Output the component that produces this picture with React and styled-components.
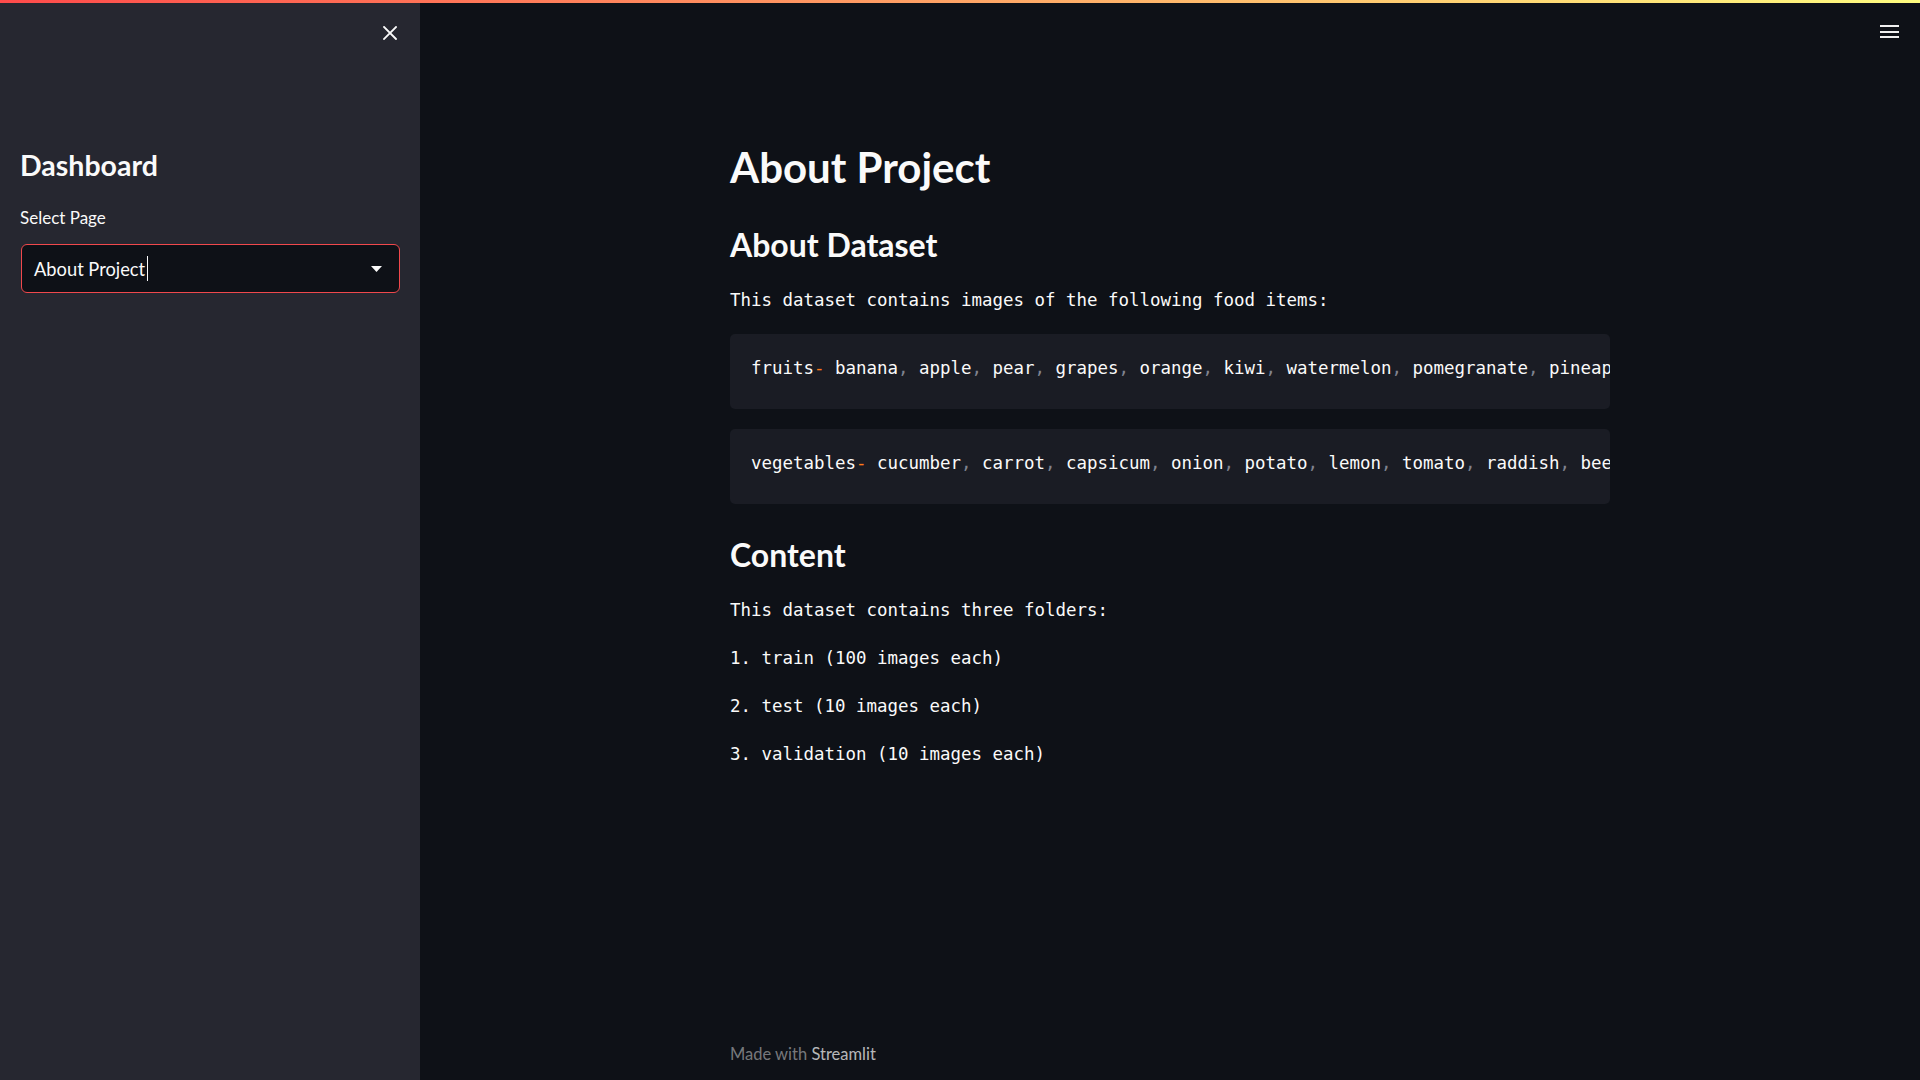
import React from 'react'
import styled, { createGlobalStyle } from 'styled-components'

const fruits = ['banana', 'apple', 'pear', 'grapes', 'orange', 'kiwi', 'watermelon', 'pomegranate', 'pineapple']
const vegetables = ['cucumber', 'carrot', 'capsicum', 'onion', 'potato', 'lemon', 'tomato', 'raddish', 'beetroot']
const folders = ['1. train (100 images each)', '2. test (10 images each)', '3. validation (10 images each)']

const CodeLine = ({ name, items }) => (
    <CodeBlock>
        <code>
            {name}<Op>-</Op>{' '}
            {items.map((item, i) => (
                <React.Fragment key={item}>
                    {item}
                    {i < items.length - 1 && <><Punct>,</Punct>{' '}</>}
                </React.Fragment>
            ))}
        </code>
    </CodeBlock>
)

const App = () => {
    return (
        <Page>
            <GlobalStyle />
            <TopDecoration />
            <Body>
                <Sidebar>
                    <SidebarHeader>
                        <IconButton aria-label="Close sidebar">
                            <svg width="14" height="14" viewBox="0 0 14 14">
                                <path d="M1 1 L13 13 M13 1 L1 13" stroke="#fafafa" strokeWidth="1.8" strokeLinecap="square" />
                            </svg>
                        </IconButton>
                    </SidebarHeader>
                    <SidebarTitle>Dashboard</SidebarTitle>
                    <Label>Select Page</Label>
                    <SelectBox>
                        <SelectValue>About Project</SelectValue>
                        <Cursor />
                        <Caret width="11" height="6" viewBox="0 0 11 6">
                            <polygon points="0,0 11,0 5.5,6" fill="#fafafa" />
                        </Caret>
                    </SelectBox>
                </Sidebar>
                <Main>
                    <MainHeader>
                        <IconButton aria-label="Menu">
                            <svg width="20" height="14" viewBox="0 0 20 14">
                                <rect x="0" y="1" width="19" height="2" fill="#f0f0f0" />
                                <rect x="0" y="7" width="19" height="2" fill="#f0f0f0" />
                                <rect x="0" y="12" width="19" height="2" fill="#f0f0f0" />
                            </svg>
                        </IconButton>
                    </MainHeader>
                    <Content>
                        <H1>About Project</H1>
                        <H2 top={33}>About Dataset</H2>
                        <Text top={21}>This dataset contains images of the following food items:</Text>
                        <CodeLine name="fruits" items={fruits} />
                        <CodeLine name="vegetables" items={vegetables} />
                        <H2 top={31}>Content</H2>
                        <Text top={21}>This dataset contains three folders:</Text>
                        {folders.map(f => (
                            <Text key={f} top={20}>{f}</Text>
                        ))}
                        <Footer>
                            Made with <FooterBrand>Streamlit</FooterBrand>
                        </Footer>
                    </Content>
                </Main>
            </Body>
        </Page>
    )
}

const GlobalStyle = createGlobalStyle`
    html, body {
        margin: 0;
        padding: 0;
        background: #0e1117;
    }
    body {
        font-family: Lato, "Noto Sans", sans-serif;
        color: #fafafa;
    }
    * {
        box-sizing: border-box;
    }
`
const Page = styled.div`
    display: flex;
    flex-direction: column;
    height: 1080px;
    overflow: hidden;
`
const TopDecoration = styled.div`
    height: 3px;
    flex: none;
    background: linear-gradient(90deg, rgb(255, 75, 75), rgb(255, 253, 128));
`
const Body = styled.div`
    flex: 1;
    display: flex;
    min-height: 0;
`
const Sidebar = styled.aside`
    width: 420px;
    flex: none;
    background: #262730;
    display: flex;
    flex-direction: column;
    padding: 0 20px 0 20px;
`
const SidebarHeader = styled.div`
    display: flex;
    justify-content: flex-end;
    padding-top: 23px;
    margin-right: 3px;
`
const IconButton = styled.button`
    background: none;
    border: none;
    padding: 0;
    margin: 0;
    display: flex;
    cursor: pointer;
`
const SidebarTitle = styled.h1`
    margin: 108px 0 0;
    font-size: 28.5px;
    line-height: 34px;
    font-weight: 700;
    color: #fafafa;
`
const Label = styled.label`
    margin-top: 25px;
    font-size: 17px;
    line-height: 22px;
    color: #fafafa;
`
const SelectBox = styled.div`
    margin-top: 15px;
    margin-left: 1px;
    height: 49px;
    display: flex;
    align-items: center;
    padding: 0 17px 0 12px;
    background: #0e1117;
    border: 1px solid #f0484c;
    border-radius: 6px;
`
const SelectValue = styled.span`
    font-size: 18.3px;
    line-height: 22px;
    color: #fafafa;
`
const Cursor = styled.span`
    width: 1px;
    height: 25px;
    margin-left: 2px;
    background: #fafafa;
`
const Caret = styled.svg`
    margin-left: auto;
`
const Main = styled.main`
    flex: 1;
    display: flex;
    flex-direction: column;
    background: #0e1117;
`
const MainHeader = styled.header`
    height: 60px;
    flex: none;
    display: flex;
    justify-content: flex-end;
    align-items: flex-start;
    padding: 21px 20px 0 0;
`
const Content = styled.div`
    flex: 1;
    width: 880px;
    margin: 0 auto;
    display: flex;
    flex-direction: column;
    padding-top: 79px;
    padding-bottom: 16px;
`
const H1 = styled.h1`
    margin: 0;
    font-size: 42px;
    line-height: 50px;
    font-weight: 700;
    color: #fafafa;
`
const H2 = styled.h2`
    margin: ${p => p.top}px 0 0;
    font-size: 32px;
    line-height: 40px;
    font-weight: 700;
    color: #fafafa;
`
const Text = styled.p`
    margin: ${p => p.top}px 0 0;
    font-family: "DejaVu Sans Mono", "Liberation Mono", monospace;
    font-size: 17.45px;
    line-height: 28px;
    color: #fafafa;
    white-space: pre;
`
const CodeBlock = styled.pre`
    margin: 20px 0 0;
    height: 75px;
    padding: 20px 21px 27px;
    background: rgb(26, 28, 36);
    border-radius: 5px;
    overflow: hidden;
    white-space: pre;
    font-family: "DejaVu Sans Mono", "Liberation Mono", monospace;
    font-size: 17.45px;
    line-height: 28px;
    color: #fafafa;
`
const Op = styled.span`
    color: #ff7a1a;
`
const Punct = styled.span`
    color: #80838f;
`
const Footer = styled.footer`
    margin-top: auto;
    font-size: 16.5px;
    line-height: 20px;
    color: rgba(250, 250, 250, 0.45);
`
const FooterBrand = styled.span`
    color: rgba(250, 250, 250, 0.72);
`

export default App
